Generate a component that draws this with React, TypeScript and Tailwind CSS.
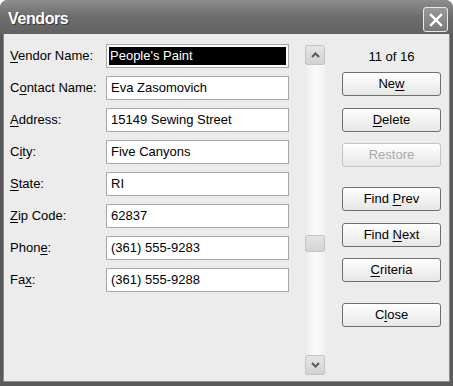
import React from "react";

type Field = { label: string; key: number; value: string; selected?: boolean };

const fields: Field[] = [
  { label: "Vendor Name:", key: 0, value: "People's Paint", selected: true },
  { label: "Contact Name:", key: 1, value: "Eva Zasomovich" },
  { label: "Address:", key: 0, value: "15149 Sewing Street" },
  { label: "City:", key: 1, value: "Five Canyons" },
  { label: "State:", key: 0, value: "RI" },
  { label: "Zip Code:", key: 0, value: "62837" },
  { label: "Phone:", key: 4, value: "(361) 555-9283" },
  { label: "Fax:", key: 2, value: "(361) 555-9288" },
];

function Hotkey({ text, at }: { text: string; at: number }) {
  if (at < 0) return <span>{text}</span>;
  return (
    <span className="whitespace-pre">
      {text.slice(0, at)}
      <span className="underline underline-offset-2">{text[at]}</span>
      {text.slice(at + 1)}
    </span>
  );
}

function Btn({ text, at, mt, disabled }: { text: string; at: number; mt: string; disabled?: boolean }) {
  return (
    <div
      className={`${mt} h-[24px] w-[99px] flex items-center justify-center rounded-[3px] border bg-gradient-to-b from-white to-[#e6e6e6] text-[13px] ${
        disabled ? "border-[#c4c4c4] text-[#a8a8a8]" : "border-[#6e6e6e] text-black"
      }`}
    >
      <Hotkey text={text} at={at} />
    </div>
  );
}

function Arrow({ up }: { up?: boolean }) {
  return (
    <div className="h-[20px] w-[20px] flex items-center justify-center rounded-[2px] border border-[#c4c4c4] bg-gradient-to-b from-[#e6e6e6] to-[#d2d2d2]">
      <svg width="9" height="6" viewBox="0 0 9 6">
        <path
          d={up ? "M1 5 L4.5 1.5 L8 5" : "M1 1 L4.5 4.5 L8 1"}
          fill="none"
          stroke="#5a5a5a"
          strokeWidth="2"
        />
      </svg>
    </div>
  );
}

export default function App() {
  return (
    <div className="w-[453px] h-[386px] bg-white" style={{ fontFamily: '"Liberation Sans", Arial, sans-serif' }}>
      <div className="w-full h-full flex flex-col rounded-t-[8px] overflow-hidden bg-[#5a5a5a]">
        {/* title bar */}
        <div className="h-[34px] shrink-0 flex items-center justify-between pl-[8px] pr-[5px] bg-gradient-to-b from-[#8e8e8e] via-[#6c6c6c] to-[#626262]">
          <span className="text-white font-bold text-[16px] tracking-[-0.4px] [text-shadow:1px_1px_0_#3a3a3a] mt-[4px]">
            Vendors
          </span>
          <div className="mt-[5px] h-[25px] w-[25px] rounded-[3px] border border-[#e8e8e8] bg-gradient-to-b from-[#9a9a9a] to-[#7a7a7a] flex items-center justify-center">
            <svg width="14" height="14" viewBox="0 0 14 14">
              <path d="M2 2 L12 12 M12 2 L2 12" stroke="white" strokeWidth="2.4" strokeLinecap="square" />
            </svg>
          </div>
        </div>
        {/* body */}
        <div className="flex-1 mx-[3px] mb-[4px] border-l border-r border-b border-[#8a8a8a] bg-[#ececec] flex text-[13px] text-black">
          <div className="pl-[6px] pt-[10px] flex flex-col gap-[8px]">
            {fields.map((f, i) => (
              <div key={i} className="flex items-center h-[24px]">
                <div className="w-[96px]">
                  <Hotkey text={f.label} at={f.key} />
                </div>
                <div className="h-[24px] w-[183px] border border-[#a8a8a8] bg-white p-[2px] flex">
                  {f.selected ? (
                    <div className="flex-1 bg-black text-white flex items-center pl-[1px]">{f.value}</div>
                  ) : (
                    <div className="flex-1 flex items-center pl-[2px]">{f.value}</div>
                  )}
                </div>
              </div>
            ))}
          </div>
          {/* scrollbar */}
          <div className="ml-[16px] mt-[11px] h-[330px] w-[20px] flex flex-col bg-gradient-to-r from-[#ececec] via-[#fbfbfb] to-[#f2f2f2]">
            <Arrow up />
            <div className="h-[170px]" />
            <div className="h-[17px] w-[20px] rounded-[2px] border border-[#c4c4c4] bg-gradient-to-b from-[#e4e4e4] to-[#d4d4d4]" />
            <div className="flex-1" />
            <Arrow />
          </div>
          {/* buttons */}
          <div className="ml-[17px] pt-[12px] flex flex-col">
            <div className="h-[22px] w-[99px] flex items-center justify-center">11 of 16</div>
            <Btn text="New" at={2} mt="mt-[4px]" />
            <Btn text="Delete" at={0} mt="mt-[12px]" />
            <Btn text="Restore" at={-1} mt="mt-[11px]" disabled />
            <Btn text="Find Prev" at={5} mt="mt-[20px]" />
            <Btn text="Find Next" at={5} mt="mt-[12px]" />
            <Btn text="Criteria" at={0} mt="mt-[11px]" />
            <Btn text="Close" at={1} mt="mt-[21px]" />
          </div>
        </div>
      </div>
    </div>
  );
}
